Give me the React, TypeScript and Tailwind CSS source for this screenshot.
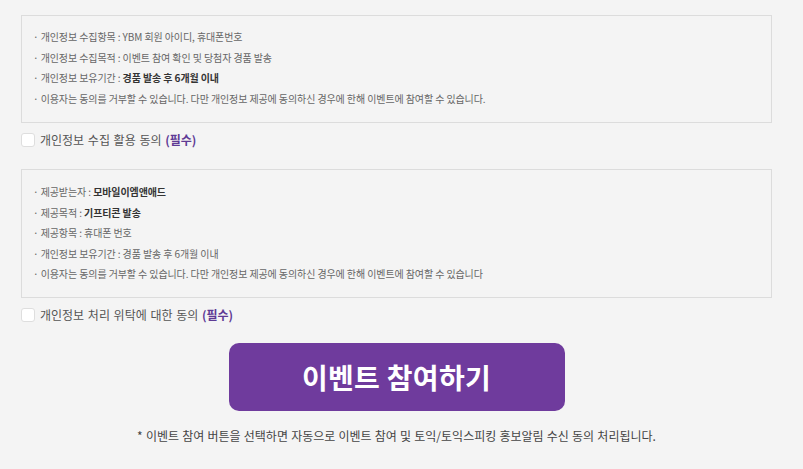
import React from "react";

const font = { fontFamily: '"Noto Sans CJK KR", "Noto Sans", sans-serif' };

function Line({ label, value, bold }: { label: string; value?: string; bold?: boolean }) {
  return (
    <li className="text-[10px] leading-[20.5px] tracking-[-0.1px] text-[#666]">
      · {label}
      {value !== undefined && (
        <>
          {" : "}
          <span className={bold ? "font-bold text-[#333]" : ""}>{value}</span>
        </>
      )}
    </li>
  );
}

function Check({ text }: { text: string }) {
  return (
    <label className="flex items-center gap-[5px]">
      <span className="w-[14px] h-[14px] bg-white border border-[#dedede] rounded-[3px]" />
      <span className="text-[12px] tracking-[0px] [word-spacing:1px] text-[#555] leading-[16px]">
        {text} <b className="text-[#5e3a94]">(필수)</b>
      </span>
    </label>
  );
}

export default function App() {
  return (
    <div className="min-h-[469px] w-full bg-[#f4f4f4]" style={font}>
      <div className="ml-[21px] w-[751px] pt-[15px] flex flex-col">
        <ul className="border border-[#dcdcdc] pl-[11px] pt-[11px] pb-[13px]">
          <Line label="개인정보 수집항목" value="YBM 회원 아이디, 휴대폰번호" />
          <Line label="개인정보 수집목적" value="이벤트 참여 확인 및 당첨자 경품 발송" />
          <Line label="개인정보 보유기간" value="경품 발송 후 6개월 이내" bold />
          <Line label="이용자는 동의를 거부할 수 있습니다. 다만 개인정보 제공에 동의하신 경우에 한해 이벤트에 참여할 수 있습니다." />
        </ul>
        <div className="mt-[9px]">
          <Check text="개인정보 수집 활용 동의" />
        </div>
        <ul className="mt-[21px] border border-[#dcdcdc] pl-[11px] pt-[12px] pb-[12.5px]">
          <Line label="제공받는자" value="모바일이엠앤애드" bold />
          <Line label="제공목적" value="기프티콘 발송" bold />
          <Line label="제공항목" value="휴대폰 번호" />
          <Line label="개인정보 보유기간" value="경품 발송 후 6개월 이내" />
          <Line label="이용자는 동의를 거부할 수 있습니다. 다만 개인정보 제공에 동의하신 경우에 한해 이벤트에 참여할 수 있습니다" />
        </ul>
        <div className="mt-[9px]">
          <Check text="개인정보 처리 위탁에 대한 동의" />
        </div>
        <div className="mt-[20px] flex justify-center">
          <button className="w-[336px] h-[68px] rounded-[10px] bg-[#6f3b9d] text-white text-[28px] font-bold tracking-[0.3px] flex items-center justify-center">
            이벤트 참여하기
          </button>
        </div>
        <p className="mt-[16px] text-center text-[12px] tracking-[0px] [word-spacing:0.5px] text-[#444]">
          * 이벤트 참여 버튼을 선택하면 자동으로 이벤트 참여 및 토익/토익스피킹 홍보알림 수신 동의 처리됩니다.
        </p>
      </div>
    </div>
  );
}
